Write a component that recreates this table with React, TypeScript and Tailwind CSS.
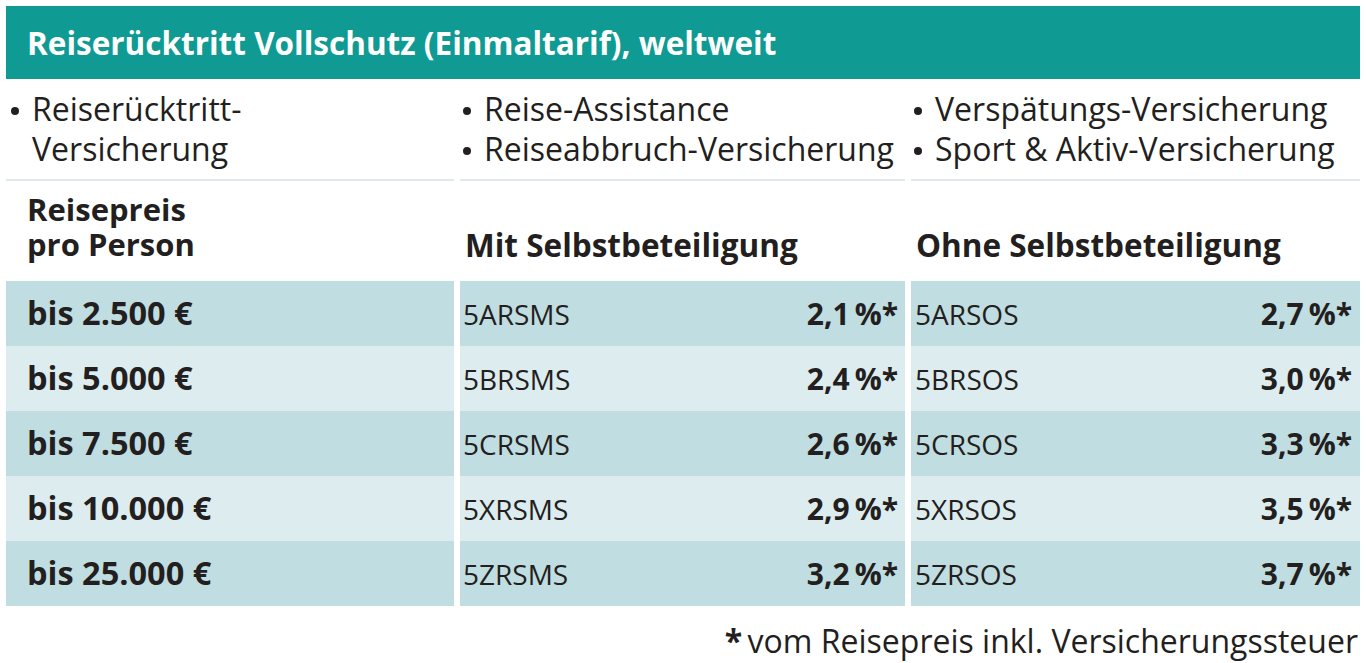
import React from "react";

const rows = [
  { price: "bis 2.500 €", c1: "5ARSMS", p1: "2,1", c2: "5ARSOS", p2: "2,7" },
  { price: "bis 5.000 €", c1: "5BRSMS", p1: "2,4", c2: "5BRSOS", p2: "3,0" },
  { price: "bis 7.500 €", c1: "5CRSMS", p1: "2,6", c2: "5CRSOS", p2: "3,3" },
  { price: "bis 10.000 €", c1: "5XRSMS", p1: "2,9", c2: "5XRSOS", p2: "3,5" },
  { price: "bis 25.000 €", c1: "5ZRSMS", p1: "3,2", c2: "5ZRSOS", p2: "3,7" },
];

function Bullet({ children }: { children: React.ReactNode }) {
  return (
    <div className="flex">
      <span className="w-[22px] shrink-0 flex h-[40px] items-center">
        <span className="block w-[8px] h-[8px] rounded-full bg-[#231f20] ml-[1px] mt-[4px]" />
      </span>
      <span>{children}</span>
    </div>
  );
}

function Pct({ v }: { v: string }) {
  return (
    <span className="font-bold text-[30px]">
      {v}
      {"\u2009"}%*
    </span>
  );
}

export default function App() {
  return (
    <div className="w-[1366px] h-[663px] bg-white px-[6px] pt-[6px] font-['Open_Sans',sans-serif] text-[#231f20]">
      <div className="h-[73px] bg-[#0f9a94] flex items-center pl-[21px] text-white font-bold text-[31.5px] leading-none">
        Reiserücktritt Vollschutz (Einmaltarif), weltweit
      </div>
      <div className="grid grid-cols-[448px_445px_449px] gap-x-[6px]">
        <div className="h-[102px] border-b-2 border-[#dfe8ea] pt-[10px] pl-[4px] text-[32px] leading-[40px]">
          <Bullet>
            Reiserücktritt-
            <br />
            Versicherung
          </Bullet>
        </div>
        <div className="h-[102px] border-b-2 border-[#dfe8ea] pt-[10px] pl-[2px] text-[32px] leading-[40px]">
          <Bullet>Reise-Assistance</Bullet>
          <Bullet>Reiseabbruch-Versicherung</Bullet>
        </div>
        <div className="h-[102px] border-b-2 border-[#dfe8ea] pt-[10px] pl-[2px] text-[32px] leading-[40px]">
          <Bullet>Verspätungs-Versicherung</Bullet>
          <Bullet>Sport &amp; Aktiv-Versicherung</Bullet>
        </div>

        <div className="h-[100px] flex flex-col justify-end pb-[19px] pl-[21px] font-bold text-[31px] leading-[35px]">
          <span>Reisepreis</span>
          <span>pro Person</span>
        </div>
        <div className="h-[100px] flex items-end pb-[19px] pl-[5px] font-bold text-[31.5px] leading-[35px]">
          Mit Selbstbeteiligung
        </div>
        <div className="h-[100px] flex items-end pb-[19px] pl-[5px] font-bold text-[31.5px] leading-[35px]">
          Ohne Selbstbeteiligung
        </div>

        {rows.map((r, i) => {
          const bg = i % 2 === 0 ? "bg-[#c0dde1]" : "bg-[#ddecef]";
          return (
            <React.Fragment key={r.price}>
              <div className={`h-[65px] flex items-center pl-[21px] font-bold text-[32.5px] ${bg}`}>
                {r.price}
              </div>
              <div className={`h-[65px] flex items-center justify-between pl-[3px] pr-[7px] ${bg}`}>
                <span className="text-[28px]">{r.c1}</span>
                <Pct v={r.p1} />
              </div>
              <div className={`h-[65px] flex items-center justify-between pl-[4px] pr-[8px] ${bg}`}>
                <span className="text-[28px]">{r.c2}</span>
                <Pct v={r.p2} />
              </div>
            </React.Fragment>
          );
        })}
      </div>
      <div className="mt-[15px] pr-[2px] text-right text-[32px] leading-[40px]">
        <span className="font-bold">*</span>
        {"\u2009"}vom Reisepreis inkl. Versicherungssteuer
      </div>
    </div>
  );
}
